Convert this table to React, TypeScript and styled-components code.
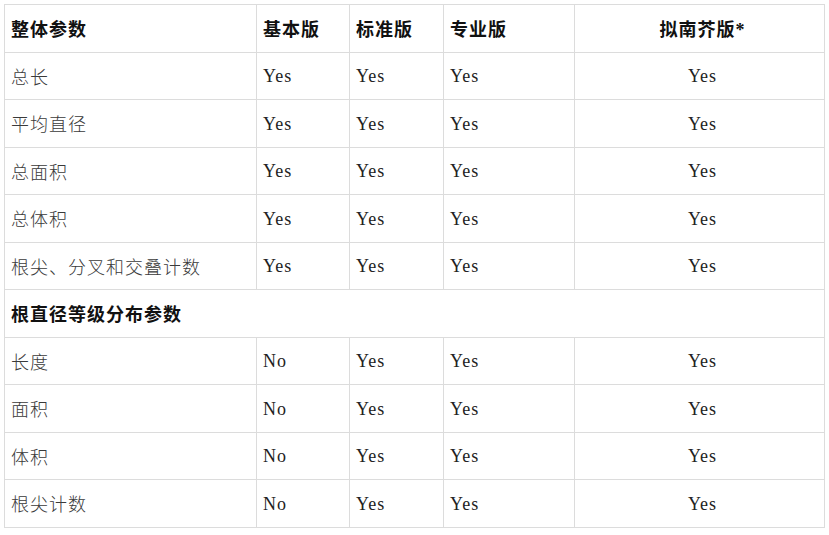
import React from 'react'
import styled, { createGlobalStyle } from 'styled-components'

const GlobalStyle = createGlobalStyle`
    html, body {
        margin: 0;
        padding: 0;
        background: #fff;
    }
    body {
        font-family: "Liberation Serif", "Noto Sans CJK SC", serif;
        color: #333;
    }
`

type Row = { label: string; values: string[] }

const overall: Row[] = [
    { label: '总长', values: ['Yes', 'Yes', 'Yes', 'Yes'] },
    { label: '平均直径', values: ['Yes', 'Yes', 'Yes', 'Yes'] },
    { label: '总面积', values: ['Yes', 'Yes', 'Yes', 'Yes'] },
    { label: '总体积', values: ['Yes', 'Yes', 'Yes', 'Yes'] },
    { label: '根尖、分叉和交叠计数', values: ['Yes', 'Yes', 'Yes', 'Yes'] },
]

const diameter: Row[] = [
    { label: '长度', values: ['No', 'Yes', 'Yes', 'Yes'] },
    { label: '面积', values: ['No', 'Yes', 'Yes', 'Yes'] },
    { label: '体积', values: ['No', 'Yes', 'Yes', 'Yes'] },
    { label: '根尖计数', values: ['No', 'Yes', 'Yes', 'Yes'] },
]

const editions = ['基本版', '标准版', '专业版', '拟南芥版*']

const App = () => {
    return (
        <>
            <GlobalStyle />
            <Wrapper>
                <Table>
                    <colgroup>
                        <col style={{ width: 252 }} />
                        <col style={{ width: 93 }} />
                        <col style={{ width: 94 }} />
                        <col style={{ width: 131 }} />
                        <col />
                    </colgroup>
                    <tbody>
                        <tr>
                            <Head>整体参数</Head>
                            {editions.map((e, i) => (
                                <Head key={e} center={i === editions.length - 1}>
                                    {e}
                                </Head>
                            ))}
                        </tr>
                        {overall.map(r => (
                            <DataRow key={r.label} row={r} />
                        ))}
                        <tr>
                            <Head colSpan={5}>根直径等级分布参数</Head>
                        </tr>
                        {diameter.map(r => (
                            <DataRow key={r.label} row={r} />
                        ))}
                    </tbody>
                </Table>
            </Wrapper>
        </>
    )
}

const DataRow = ({ row }: { row: Row }) => (
    <tr>
        <Cell>{row.label}</Cell>
        {row.values.map((v, i) => (
            <Cell key={i} center={i === row.values.length - 1}>
                <Value>{v}</Value>
            </Cell>
        ))}
    </tr>
)

const Wrapper = styled.div`
    padding: 4px;
`

const Table = styled.table`
    width: 100%;
    table-layout: fixed;
    border-collapse: collapse;
    font-size: 18px;
`

const Cell = styled.td<{ center?: boolean }>`
    height: 46.5px;
    padding: 0 0 0 6px;
    border: 1px solid #dcdcdc;
    vertical-align: middle;
    text-align: ${({ center }) => (center ? 'center' : 'left')};
    font-weight: 300;
    letter-spacing: 1px;
    color: #3a3a3a;
    white-space: nowrap;
`

const Head = styled(Cell).attrs({ as: 'td' })`
    font-weight: 700;
    color: #111;
    letter-spacing: 1px;
`

const Value = styled.span`
    font-family: "Liberation Serif", serif;
    font-size: 18px;
    letter-spacing: 1px;
    vertical-align: -2px;
    color: #222;
`

export default App
